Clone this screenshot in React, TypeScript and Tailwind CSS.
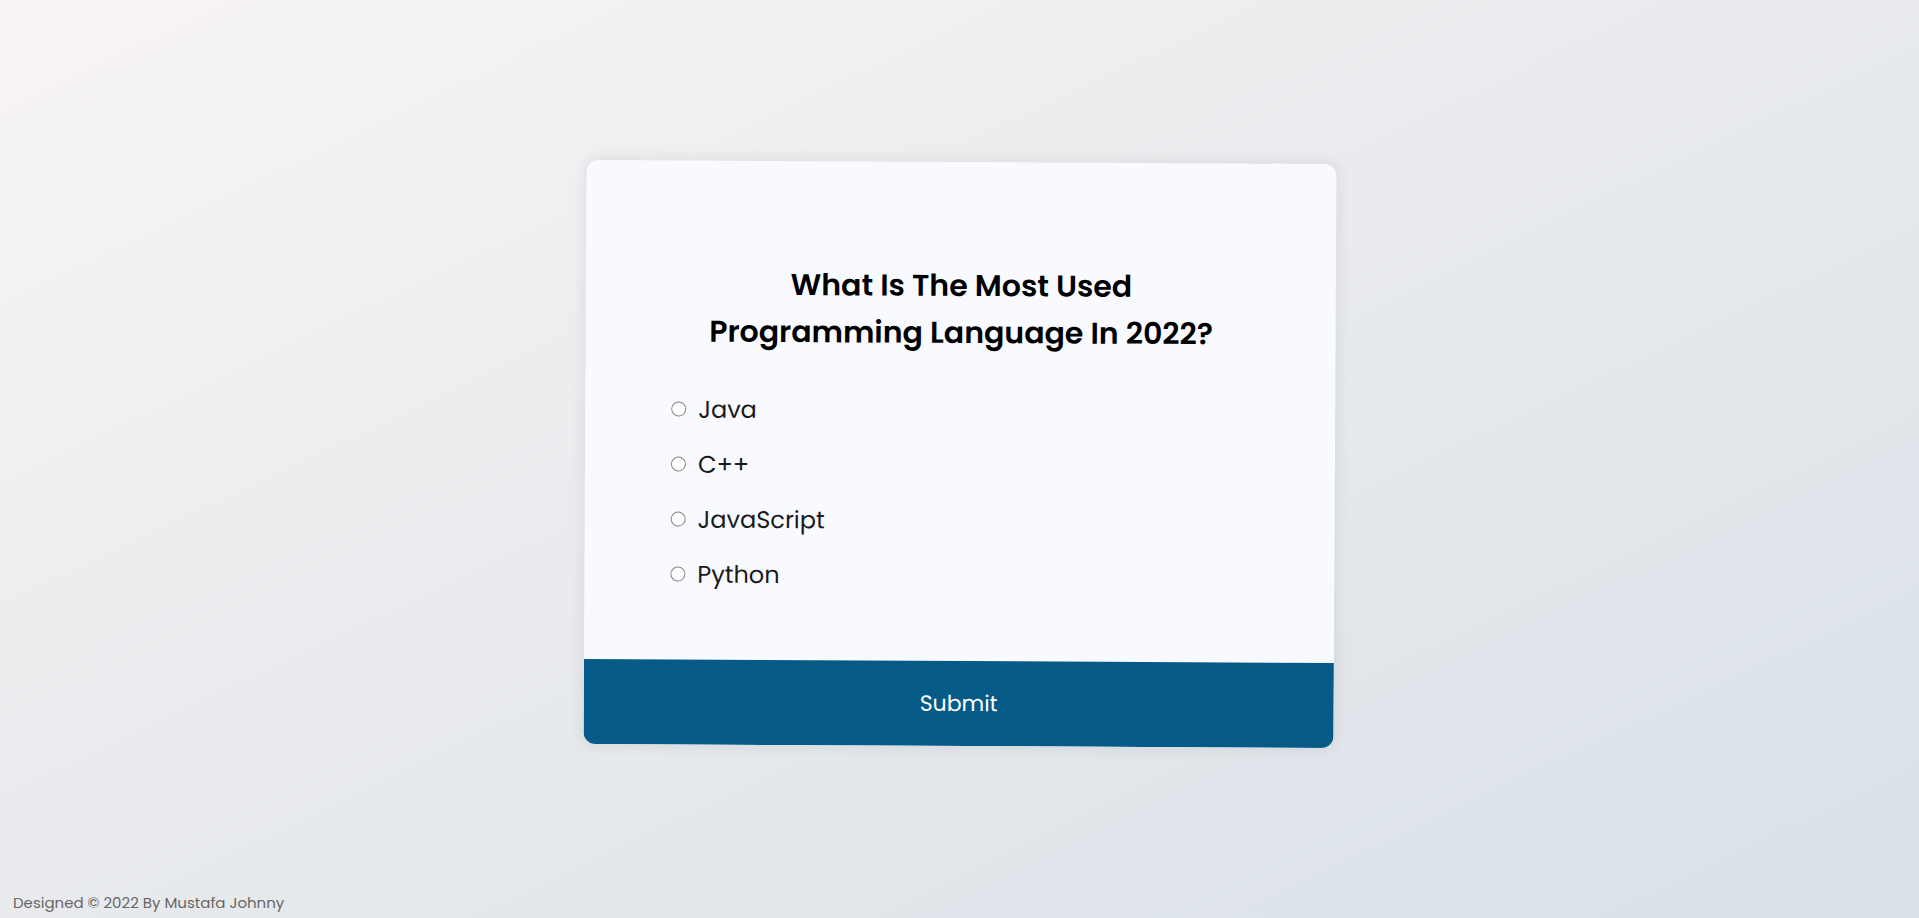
import React from "react";

const options = ["Java", "C++", "JavaScript", "Python"];

export default function App() {
  return (
    <div className="font-['Poppins',_'Inter',_sans-serif] h-[918px] w-full overflow-hidden flex flex-col bg-gradient-to-br from-[#f8f4f5] via-[#e8eaed] to-[#d8e1e8]">
      <main className="flex-1 flex items-center justify-center pt-[16px]">
        <div className="w-[750px] rotate-[0.3deg] rounded-[12px] overflow-hidden bg-[#f8faff] shadow-[0_0_12px_3px_rgba(100,100,100,0.1)]">
          <div className="pt-[100px] pl-[86px] pr-[85px] pb-[58px]">
            <h2 className="text-center text-[30px] leading-[47px] font-semibold text-black">
              What Is The Most Used
              <br />
              Programming Language In 2022?
            </h2>
            <ul className="mt-[27px]">
              {options.map((opt) => (
                <li key={opt} className="h-[55px] flex items-center gap-[12px]">
                  <input
                    type="radio"
                    name="answer"
                    id={opt}
                    className="appearance-none m-0 w-[15px] h-[15px] rounded-full border border-[#858585] bg-white"
                  />
                  <label htmlFor={opt} className="text-[24px] text-[#1a1a1a]">
                    {opt}
                  </label>
                </li>
              ))}
            </ul>
          </div>
          <button className="w-full h-[85px] bg-[#055a87] text-white text-[22px]">
            Submit
          </button>
        </div>
      </main>
      <footer className="pl-[13px] pb-[4px] text-[15px] text-[#666666]">
        Designed © 2022 By Mustafa Johnny
      </footer>
    </div>
  );
}
